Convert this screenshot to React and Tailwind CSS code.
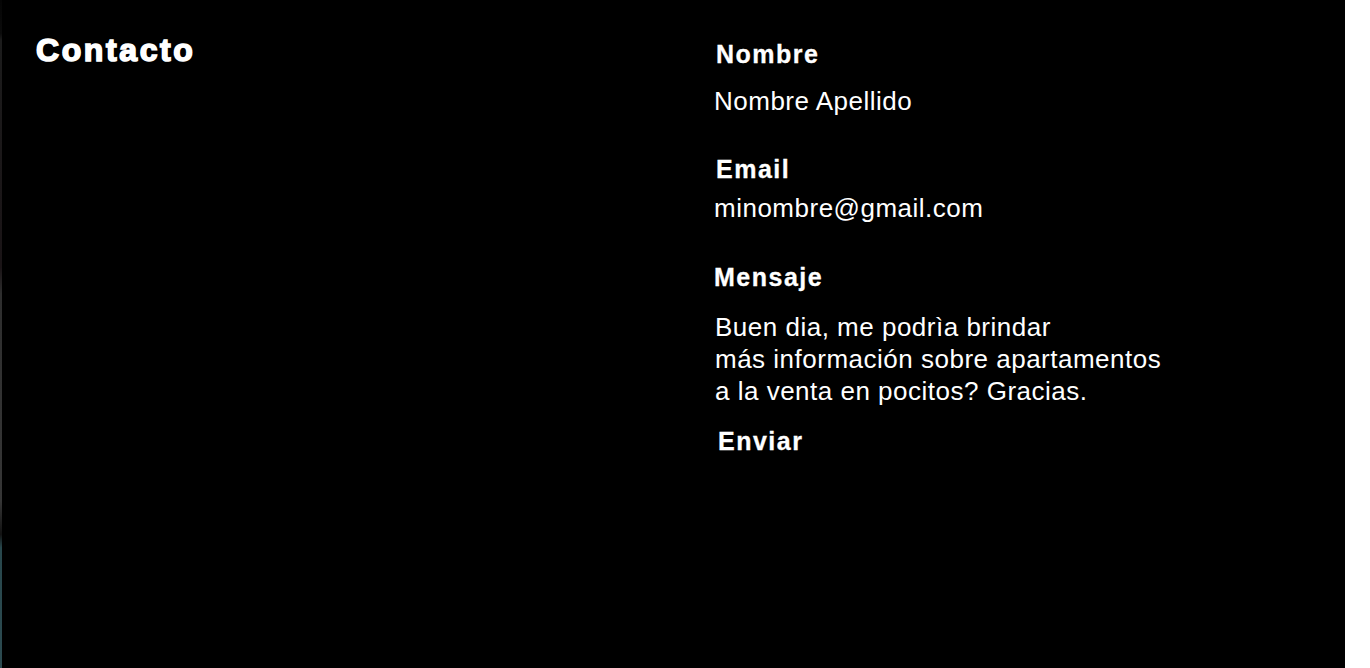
import React, { useState } from 'react'

export default function App() {
  const [nombre] = useState('Nombre Apellido')
  const [email] = useState('minombre@gmail.com')

  return (
    <div className="flex w-[1370px] h-[668px] bg-white overflow-hidden">
      <div className="flex w-[1345px] h-full bg-black text-white font-['Liberation_Sans',Arial,sans-serif]">
        {/* edge of the background photo */}
        <div className="w-[2px] h-full bg-[linear-gradient(to_bottom,#050505_0%,#0b0b0b_5%,#1c1c1c_6%,#1a1416_40%,#2e2e2e_44%,#363636_75%,#121212_80%,#28474c_82%,#2c4a50_100%)]" />

        {/* Left column */}
        <div className="w-[676px] pl-[34px] pt-[32px]">
          <h1 className="text-[32px] leading-[36px] font-bold tracking-[2.6px] [-webkit-text-stroke:1.6px_white]">Contacto</h1>
        </div>

        {/* Form */}
        <form className="flex flex-col pt-[39px] pl-[36px]" onSubmit={e => e.preventDefault()}>
          <label className="text-[25px] leading-[30px] font-bold tracking-[1.5px] pl-[2px] [-webkit-text-stroke:0.3px_white]">Nombre</label>
          <p className="mt-[16px] text-[26px] leading-[32px] tracking-[0.5px]">{nombre}</p>

          <label className="mt-[37px] text-[25px] leading-[30px] font-bold tracking-[1.5px] pl-[2px] [-webkit-text-stroke:0.3px_white]">Email</label>
          <p className="mt-[8px] text-[26px] leading-[32px] tracking-[0.5px]">{email}</p>

          <label className="mt-[38px] text-[25px] leading-[30px] font-bold tracking-[1.5px] [-webkit-text-stroke:0.3px_white]">Mensaje</label>
          <p className="mt-[19px] text-[26px] leading-[32px] tracking-[0.5px] pl-[1px]">
            Buen dia, me podrìa brindar<br />
            más información sobre apartamentos<br />
            a la venta en pocitos? Gracias.
          </p>

          <button type="submit" className="self-start mt-[19px] pl-[4px] text-[25px] leading-[30px] font-bold tracking-[1.5px] text-white [-webkit-text-stroke:0.3px_white]">
            Enviar
          </button>
        </form>
      </div>
    </div>
  )
}
